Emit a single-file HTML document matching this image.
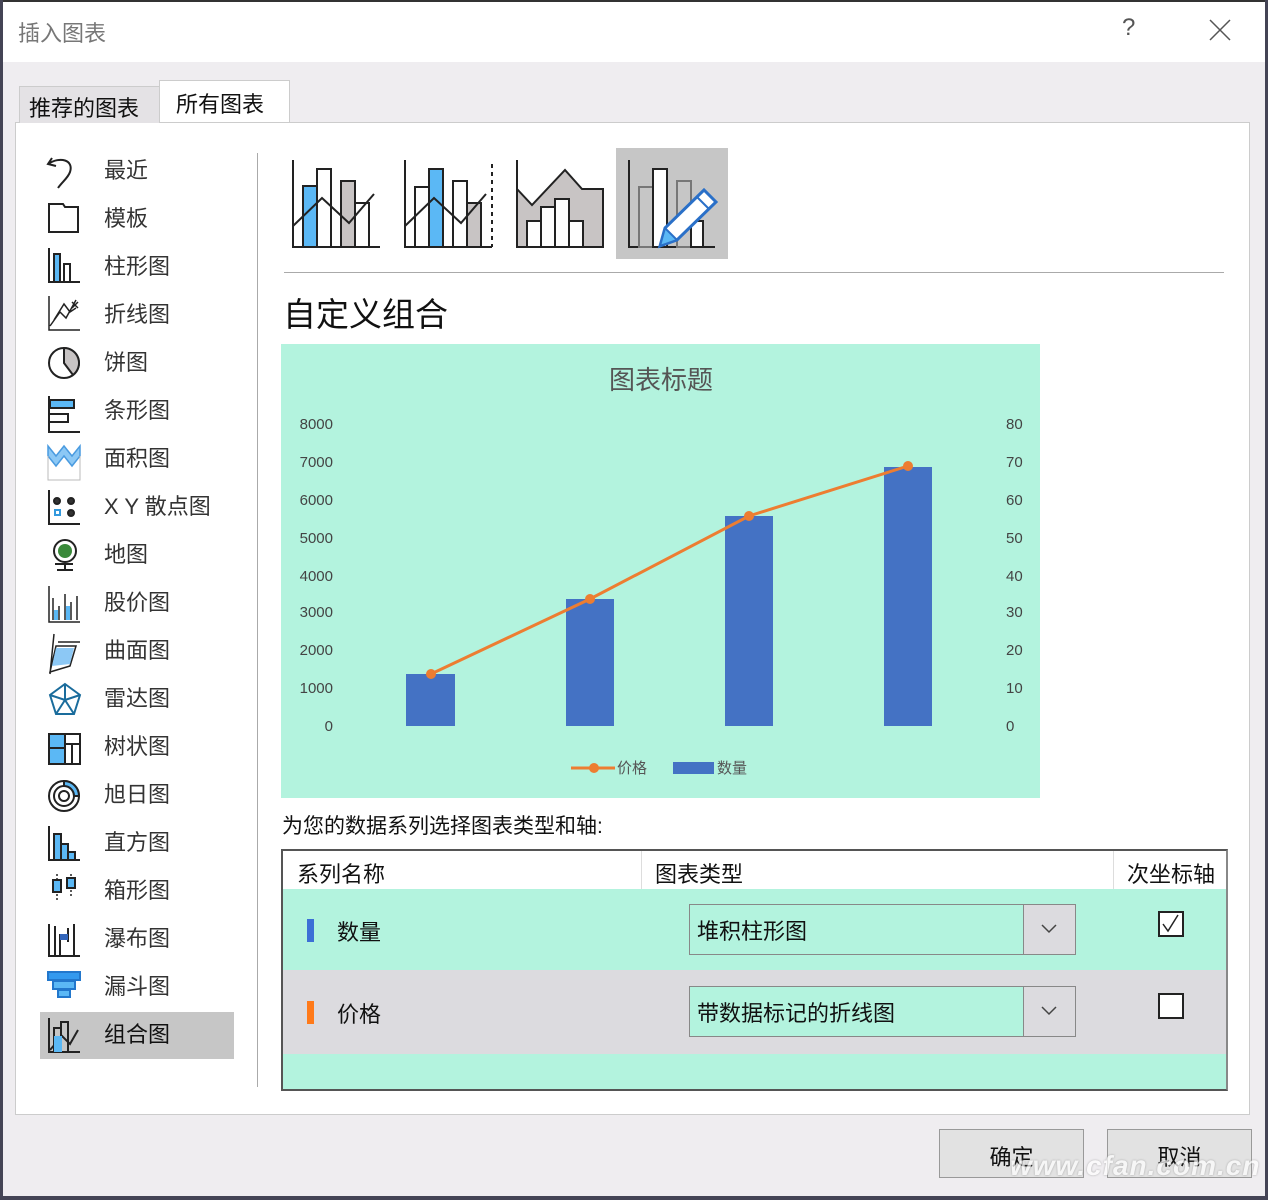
<!DOCTYPE html>
<html><head><meta charset="utf-8"><style>
*{margin:0;padding:0;box-sizing:border-box}
body{width:1268px;height:1200px;background:#efedf0;position:relative;overflow:hidden;font-family:"Liberation Sans","Noto Sans CJK SC",sans-serif;color:#222}
.a{position:absolute}
.it{position:absolute;left:104px;font-size:22px;color:#333;line-height:26px}
</style></head><body>
<div class="a" style="left:0;top:0;width:1268px;height:62px;background:#fff;border-top:2px solid #333"></div>
<div class="a" style="left:0;top:0;width:3px;height:1200px;background:#445"></div>
<div class="a" style="left:1265px;top:0;width:3px;height:1200px;background:#445"></div>
<div class="a" style="left:0;top:1196px;width:1268px;height:4px;background:#445"></div>
<div class="a" style="left:18px;top:16px;font-size:22px;color:#777">插入图表</div>
<div class="a" style="left:1122px;top:14px;font-size:24px;color:#555">?</div>
<svg class="a" style="left:1208px;top:18px" width="24" height="24"><path d="M2 2L22 22M22 2L2 22" stroke="#555" stroke-width="1.5"/></svg>
<div class="a" style="left:19px;top:86px;width:141px;height:38px;background:#e4e2e5;border:1px solid #ccc;border-bottom:none;font-size:22px;padding:4px 0 0 9px;color:#111">推荐的图表</div>
<div class="a" style="left:159px;top:80px;width:131px;height:45px;background:#fff;border:1px solid #ccc;border-bottom:none;font-size:22px;padding:6px 0 0 16px;color:#111">所有图表</div>
<div class="a" style="left:15px;top:123px;width:1235px;height:992px;background:#fff;border:1px solid #ccc;border-top:none"></div>
<div class="a" style="left:160px;top:122px;width:1090px;height:1px;background:#ccc"></div>
<div class="a" style="left:15px;top:122px;width:4px;height:1px;background:#ccc"></div>
<div class="a" style="left:257px;top:153px;width:1px;height:934px;background:#aaa"></div>
<div class="a" style="left:40px;top:1012px;width:194px;height:47px;background:#c6c6c6"></div>
<svg class="a" style="left:40px;top:150px" width="50" height="920" fill="none" stroke="#222" stroke-width="2">
<path d="M12 8L8 14L16 16M8 14C20 6 34 10 30 22C28 28 22 32 18 38"/>
<path d="M9 54H23L25 57H38V82H9Z"/>
<path d="M9 98V132H40" /><rect x="14" y="104" width="6" height="28" fill="#5bb8f5"/><rect x="24" y="114" width="6" height="18"/>
<path d="M9 146V180H40M10 176L20 162L26 168L36 150M14 170L24 154L30 162L36 158M32 152L38 158M38 152L32 158" stroke-width="1.5"/>
<circle cx="24" cy="213" r="15"/><path d="M24 198V213L33 225A15 15 0 0 0 24 198Z" fill="#c8c4c4"/>
<path d="M9 246V282H40M9 250H34V258H9M9 264H28V272H9" /><rect x="10" y="250" width="24" height="8" fill="#5bb8f5"/>
<path d="M8 296L16 306L24 296L32 306L40 296V306L32 316L24 306L16 316L8 306Z" fill="#8cc8f5" stroke="#4a9be0" stroke-width="1.5"/><path d="M8 306V330H40V306" stroke="#bbb" stroke-width="1"/>
<path d="M9 340V374H40"/><circle cx="17" cy="351" r="3" fill="#333"/><circle cx="31" cy="351" r="3" fill="#333"/><rect x="15" y="360" width="5" height="5" stroke="#3399dd"/><circle cx="31" cy="363" r="3" fill="#333"/>
<circle cx="25" cy="401" r="11"/><circle cx="25" cy="401" r="7" fill="#3a8a3a" stroke="none"/><path d="M15 414H33M25 414V420M17 420H33"/>
<path d="M9 436V472H40M13 470V448M19 470V456M25 470V444M31 470V452M37 470V446" stroke-width="1.5"/><rect x="14" y="460" width="4" height="10" fill="#5bb8f5" stroke="none"/><rect x="26" y="456" width="4" height="14" fill="#5bb8f5" stroke="none"/>
<path d="M10 522L16 496L36 496L30 516ZM14 484L10 524M18 492H40" stroke-width="1.5"/><path d="M16 498L34 498L30 514L12 516Z" fill="#8cc8f5" stroke="none"/>
<path d="M25 534L40 545L34 564H16L10 545Z M25 534V550L10 545M25 550L40 545M25 550L16 564M25 550L34 564" stroke="#1a6c9c"/>
<rect x="9" y="584" width="31" height="30"/><rect x="10" y="585" width="15" height="28" fill="#5bb8f5" stroke="none"/><path d="M25 584V614M9 598H25M25 594H40M32 594V614"/>
<circle cx="24" cy="646" r="15"/><circle cx="24" cy="646" r="10"/><circle cx="24" cy="646" r="5"/><path d="M24 631A15 15 0 0 1 39 646H34A10 10 0 0 0 24 636Z" fill="#5bb8f5"/>
<path d="M9 676V710H40"/><rect x="14" y="684" width="7" height="26" fill="#5bb8f5"/><rect x="21" y="694" width="7" height="16" fill="#5bb8f5"/><rect x="28" y="702" width="7" height="8" fill="#5bb8f5"/>
<path d="M17 724V752M31 724V748" stroke-width="1.5" stroke-dasharray="2 2"/><rect x="13" y="730" width="8" height="12" fill="#5bb8f5"/><rect x="27" y="728" width="8" height="10" fill="#5bb8f5"/>
<path d="M9 774V806H40M15 806V776M20 806V784M28 778V792M34 806V774"/><rect x="20" y="784" width="8" height="6" fill="#3366bb" stroke="none"/>
<rect x="8" y="822" width="32" height="8" fill="#3399ee" stroke="#2277cc"/><rect x="13" y="831" width="22" height="8" fill="#5bb8f5" stroke="#2277cc"/><rect x="18" y="840" width="12" height="7" fill="#5bb8f5" stroke="#2277cc"/>
<path d="M9 868V902H40" /><rect x="14" y="878" width="7" height="24" /><rect x="21" y="872" width="7" height="30"/><path d="M10 900L22 886L30 894L38 880" /><path d="M14 886L22 886V902H14Z" fill="#5bb8f5" stroke="none"/>
</svg>
<div class="it" style="top:158px">最近</div>
<div class="it" style="top:206px">模板</div>
<div class="it" style="top:254px">柱形图</div>
<div class="it" style="top:302px">折线图</div>
<div class="it" style="top:350px">饼图</div>
<div class="it" style="top:398px">条形图</div>
<div class="it" style="top:446px">面积图</div>
<div class="it" style="top:494px">X Y 散点图</div>
<div class="it" style="top:542px">地图</div>
<div class="it" style="top:590px">股价图</div>
<div class="it" style="top:638px">曲面图</div>
<div class="it" style="top:686px">雷达图</div>
<div class="it" style="top:734px">树状图</div>
<div class="it" style="top:782px">旭日图</div>
<div class="it" style="top:830px">直方图</div>
<div class="it" style="top:878px">箱形图</div>
<div class="it" style="top:926px">瀑布图</div>
<div class="it" style="top:974px">漏斗图</div>
<div class="it" style="top:1022px;color:#111">组合图</div>
<div class="a" style="left:616px;top:148px;width:112px;height:111px;background:#c6c6c6"></div>
<svg class="a" style="left:280px;top:140px" width="460" height="130" fill="none" stroke="#222" stroke-width="2">
<path d="M13 20V107H100"/><rect x="23" y="46" width="14" height="61" fill="#5bb8f5"/><rect x="37" y="29" width="14" height="78" fill="#fff"/><rect x="61" y="41" width="14" height="66" fill="#c8c4c4"/><rect x="75" y="63" width="14" height="44" fill="#fff"/><path d="M13 86L42 58L69 83L94 54"/>
<path d="M125 20V107H212M212 20V107" /><path d="M212 20V107" stroke="#fff" stroke-dasharray="4 4"/><rect x="135" y="47" width="14" height="60" fill="#fff"/><rect x="149" y="29" width="14" height="78" fill="#5bb8f5"/><rect x="173" y="41" width="14" height="66" fill="#fff"/><rect x="187" y="63" width="14" height="44" fill="#c8c4c4"/><path d="M125 86L154 58L181 83L206 54"/>
<path d="M237 49L252 65L285 30L302 49H323V107H237Z" fill="#c8c4c4"/><path d="M237 20V107H323"/><rect x="247" y="81" width="14" height="26" fill="#fff"/><rect x="261" y="67" width="14" height="40" fill="#fff"/><rect x="275" y="59" width="14" height="48" fill="#fff"/><rect x="289" y="81" width="14" height="26" fill="#fff"/>
<path d="M349 20V107H435"/><rect x="359" y="47" width="14" height="60" stroke="#777" fill="#c6c6c6"/><rect x="373" y="29" width="14" height="78" fill="#fff"/><rect x="397" y="41" width="14" height="66" stroke="#777" fill="#c6c6c6"/><rect x="411" y="81" width="12" height="26" fill="#fff"/>
<path d="M380 106L385 88L424 50L436 62L397 100Z" fill="#fff" stroke="#2a70c8" stroke-width="3"/><path d="M380 106L385 88L397 100Z" fill="#5bb8f5" stroke="#2a70c8" stroke-width="2"/><path d="M417 57L429 69" stroke="#2a70c8" stroke-width="2"/>
</svg>
<div class="a" style="left:284px;top:272px;width:940px;height:1px;background:#aaa"></div>
<div class="a" style="left:283px;top:288px;font-size:33px;color:#111">自定义组合</div>
<svg class="a" style="left:281px;top:344px" width="759" height="454">
<rect width="759" height="454" fill="#b3f3de"/>
<text x="380" y="45" font-size="26" fill="#555" text-anchor="middle" font-family="Liberation Sans,Noto Sans CJK SC,sans-serif">图表标题</text>
<g font-size="15" fill="#444" font-family="Liberation Sans,sans-serif">
<text x="52" y="85" text-anchor="end">8000</text><text x="52" y="123" text-anchor="end">7000</text><text x="52" y="161" text-anchor="end">6000</text><text x="52" y="199" text-anchor="end">5000</text><text x="52" y="237" text-anchor="end">4000</text><text x="52" y="273" text-anchor="end">3000</text><text x="52" y="311" text-anchor="end">2000</text><text x="52" y="349" text-anchor="end">1000</text><text x="52" y="387" text-anchor="end">0</text>
<text x="725" y="85">80</text><text x="725" y="123">70</text><text x="725" y="161">60</text><text x="725" y="199">50</text><text x="725" y="237">40</text><text x="725" y="273">30</text><text x="725" y="311">20</text><text x="725" y="349">10</text><text x="725" y="387">0</text>
</g>
<g fill="#4472c4"><rect x="125" y="330" width="49" height="52"/><rect x="285" y="255" width="48" height="127"/><rect x="444" y="172" width="48" height="210"/><rect x="603" y="123" width="48" height="259"/></g>
<polyline points="150,330 309,255 468,172 627,122" fill="none" stroke="#ed7d31" stroke-width="3"/>
<g fill="#ed7d31"><circle cx="150" cy="330" r="5"/><circle cx="309" cy="255" r="5"/><circle cx="468" cy="172" r="5"/><circle cx="627" cy="122" r="5"/><circle cx="313" cy="424" r="5"/></g>
<path d="M290 424H334" stroke="#ed7d31" stroke-width="3"/>
<text x="336" y="429" font-size="15" fill="#555" font-family="Liberation Sans,Noto Sans CJK SC,sans-serif">价格</text>
<rect x="392" y="418" width="41" height="12" fill="#4472c4"/>
<text x="436" y="429" font-size="15" fill="#555" font-family="Liberation Sans,Noto Sans CJK SC,sans-serif">数量</text>
</svg>
<div class="a" style="left:282px;top:810px;font-size:21px;color:#111">为您的数据系列选择图表类型和轴:</div>
<div class="a" style="left:281px;top:849px;width:947px;height:242px;border:2px solid #555;background:#fff;border-right-color:#888">
 <div class="a" style="left:358px;top:0;width:1px;height:38px;background:#ddd"></div>
 <div class="a" style="left:830px;top:0;width:1px;height:38px;background:#ddd"></div>
 <div class="a" style="left:14px;top:6px;font-size:22px;color:#111">系列名称</div>
 <div class="a" style="left:372px;top:6px;font-size:22px;color:#111">图表类型</div>
 <div class="a" style="left:844px;top:6px;font-size:22px;color:#111">次坐标轴</div>
 <div class="a" style="left:0;top:38px;width:943px;height:81px;background:#b3f3de"></div>
 <div class="a" style="left:0;top:119px;width:943px;height:84px;background:#dcdbdf"></div>
 <div class="a" style="left:0;top:203px;width:943px;height:35px;background:#b3f3de"></div>
 <div class="a" style="left:24px;top:68px;width:7px;height:23px;background:#3c6fd6"></div>
 <div class="a" style="left:54px;top:64px;font-size:22px;color:#111">数量</div>
 <div class="a" style="left:24px;top:150px;width:7px;height:23px;background:#ff7a1a"></div>
 <div class="a" style="left:54px;top:146px;font-size:22px;color:#111">价格</div>
 <div class="a" style="left:406px;top:53px;width:387px;height:51px;border:1px solid #888;background:#b3f3de"><div class="a" style="left:333px;top:0;width:52px;height:49px;background:#dcdbdf;border-left:1px solid #888"></div><div class="a" style="left:7px;top:9px;font-size:22px;color:#111">堆积柱形图</div><svg class="a" style="left:350px;top:18px" width="18" height="12"><path d="M2 2L9 9L16 2" fill="none" stroke="#444" stroke-width="1.5"/></svg></div>
 <div class="a" style="left:406px;top:135px;width:387px;height:51px;border:1px solid #888;background:#b3f3de"><div class="a" style="left:333px;top:0;width:52px;height:49px;background:#dcdbdf;border-left:1px solid #888"></div><div class="a" style="left:7px;top:9px;font-size:22px;color:#111">带数据标记的折线图</div><svg class="a" style="left:350px;top:18px" width="18" height="12"><path d="M2 2L9 9L16 2" fill="none" stroke="#444" stroke-width="1.5"/></svg></div>
 <div class="a" style="left:875px;top:60px;width:26px;height:26px;border:2px solid #222;background:#fff"><svg width="22" height="22"><path d="M3 11L8 18L18 2" fill="none" stroke="#222" stroke-width="1.5"/></svg></div>
 <div class="a" style="left:875px;top:142px;width:26px;height:26px;border:2px solid #222;background:#fff"></div>
</div>
<div class="a" style="left:939px;top:1129px;width:145px;height:49px;background:#e2e2e2;border:1px solid #999;font-size:22px;text-align:center;padding-top:10px;color:#111">确定</div>
<div class="a" style="left:1107px;top:1129px;width:145px;height:49px;background:#e2e2e2;border:1px solid #999;font-size:22px;text-align:center;padding-top:10px;color:#111">取消</div>
<div class="a" style="left:1010px;top:1150px;font-size:28px;font-style:italic;font-weight:bold;color:#fff;opacity:.7;letter-spacing:1px;text-shadow:0 0 2px #888">www.cfan.com.cn</div>
</body></html>
